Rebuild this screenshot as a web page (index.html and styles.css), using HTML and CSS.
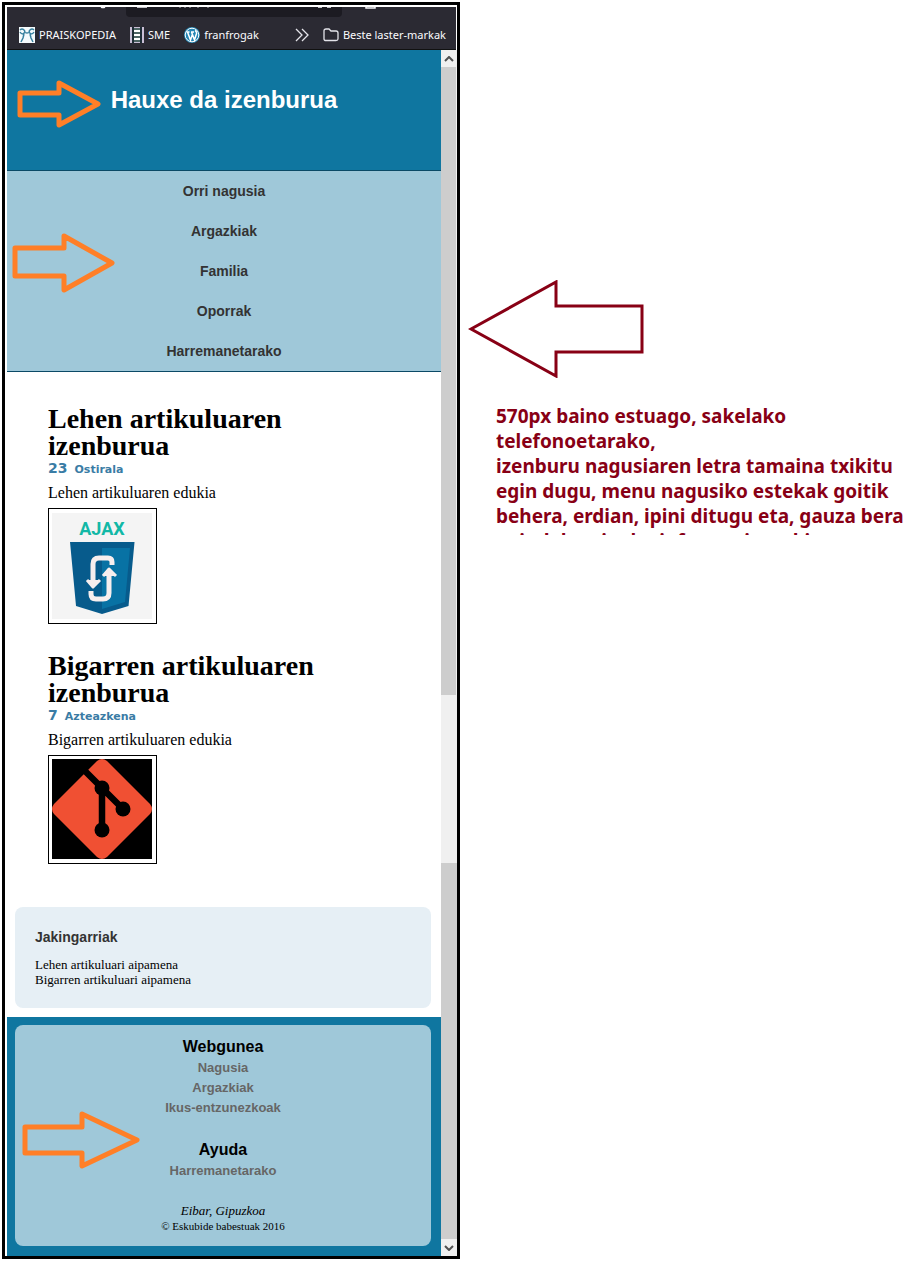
FILE: index.html
```html
<!DOCTYPE html>
<html lang="eu">
<head>
<meta charset="utf-8">
<title>Hauxe da izenburua</title>
<link rel="stylesheet" href="styles.css">
</head>
<body>
<div class="layout">
  <div class="browser">
    <div class="toolbar">
      <div class="tabs">
        <svg class="tab-icons" viewBox="0 0 449 10" aria-hidden="true">
          <path d="M119 0v6q0 4 4 4h208q4 0 4-4V0z" fill="#1c1b22"/>
          <path d="M94 0q2 1 4 0M130 0h10M359 0v1h9V0M311 0h4M320 0h4" stroke="#fbfbfe" stroke-width="1.500" fill="none"/>
          <path d="M173 0v1M178 0v1M183 0v1M191 0v1M201 0v1" stroke="#bbb" fill="none"/>
        </svg>
      </div>
      <nav class="bookmarks" aria-label="Laster-markak">
        <a class="bookmark" href="#"><svg width="16" height="16" viewBox="0 0 16 16" aria-hidden="true"><rect width="16" height="16" fill="#f5fbfd"/><path d="M1 3q2-2 4 0t-1 4q-2 0-3-2M15 3q-2-2-4 0t1 4q2 0 3-2M5 5q3 2 6 0M5 7l-1 4-2 4M11 7l1 4 2 4" fill="none" stroke="#38819f" stroke-width="1.500"/></svg>PRAISKOPEDIA</a>
        <a class="bookmark" href="#"><svg width="14" height="16" viewBox="0 0 14 16" aria-hidden="true"><rect width="14" height="16" fill="#c9bfd6"/><path d="M3 0v16M11 0v16" stroke="#1d2c35" stroke-width="2"/><path d="M4 2h6M4 6h6M4 10h6M4 14h6" stroke="#25483f" stroke-width="1.500"/><path d="M4 4h6M4 8h6M4 12h6" stroke="#fff" stroke-width="2"/></svg>SME</a>
        <a class="bookmark" href="#"><svg width="16" height="16" viewBox="0 0 16 16" aria-hidden="true"><circle cx="8" cy="8" r="8" fill="#2587b5"/><circle cx="8" cy="8" r="6.800" fill="none" stroke="#fff" stroke-width="1"/><path d="M2.500 5h3M7 5h3M3.500 5l3 8L8.500 7M7.500 5l3 8 2.200-7q-.5-2-1.700-2.500" fill="none" stroke="#fff" stroke-width="1.500"/></svg>franfrogak</a>
        <button class="more" type="button" aria-label="Gehiago"><svg width="14" height="14" viewBox="0 0 14 14" aria-hidden="true"><path d="M1 1l6 6-6 6M7 1l6 6-6 6" fill="none" stroke="#e4e4ea" stroke-width="1.300"/></svg></button>
        <a class="bookmark folder" href="#"><svg width="16" height="14" viewBox="0 0 16 14" aria-hidden="true"><path d="M1 11V3q0-2 2-2h3l2 2h5q2 0 2 2v6q0 1.500-2 1.500H3Q1 12.500 1 11z" fill="none" stroke="#e4e4ea" stroke-width="1.300"/></svg>Beste laster-markak</a>
      </nav>
    </div>
    <div class="viewport">
      <div class="page">
        <header class="masthead"><h1>Hauxe da izenburua</h1></header>
        <nav class="menu" aria-label="Menu nagusia">
          <a href="#">Orri nagusia</a>
          <a href="#">Argazkiak</a>
          <a href="#">Familia</a>
          <a href="#">Oporrak</a>
          <a href="#">Harremanetarako</a>
        </nav>
        <main class="articles">
          <article>
            <h2>Lehen artikuluaren izenburua</h2>
            <p class="date"><span class="day">23</span>Ostirala</p>
            <p class="text">Lehen artikuluaren edukia</p>
            <svg class="picture" width="109" height="116" viewBox="1 1 107 114" role="img" aria-label="AJAX">
              <rect x="4" y="5" width="100" height="106" fill="#f4f4f4"/>
              <text class="ajax" x="54" y="27" text-anchor="middle">AJAX</text>
              <path d="M22 34h64.500l-6 64L54 106l-26-8z" fill="#075b8c"/>
              <path d="M54 40h28l-5 54-23 7z" fill="#0872a4"/>
              <path d="M64 57v-3q0-4-4-4H51q-6 0-6 6v20M43 83v3q0 5 5 5h7q6 0 6-6V65" fill="none" stroke="#f7eeee" stroke-width="5"/>
              <path d="M39 72l6 7 7-7M55 68l6-7 7 7" fill="#f7eeee" stroke="#f7eeee" stroke-width="3" stroke-linejoin="round"/>
            </svg>
          </article>
          <article>
            <h2>Bigarren artikuluaren izenburua</h2>
            <p class="date"><span class="day">7</span>Azteazkena</p>
            <p class="text">Bigarren artikuluaren edukia</p>
            <svg class="picture" width="109" height="109" viewBox="1 1 107 107" role="img" aria-label="Git">
              <rect x="4" y="4" width="100" height="100" fill="#000"/>
              <path d="M49 6q5-4 10 0l43 43q4 5 0 10l-43 43q-5 4-10 0L6 59q-4-5 0-10z" fill="#f05033"/>
              <path d="M34 13l20 20 21 21M54 33v42" fill="none" stroke="#000" stroke-width="6.500"/>
              <circle cx="54" cy="33" r="7.500"/><circle cx="75" cy="54" r="7.500"/><circle cx="54" cy="75" r="7.500"/>
            </svg>
          </article>
        </main>
        <aside class="facts">
          <h3>Jakingarriak</h3>
          <p>Lehen artikuluari aipamena</p>
          <p>Bigarren artikuluari aipamena</p>
        </aside>
        <footer class="footer">
          <div class="panel">
            <section>
              <h4>Webgunea</h4>
              <a href="#">Nagusia</a>
              <a href="#">Argazkiak</a>
              <a href="#">Ikus-entzunezkoak</a>
            </section>
            <section>
              <h4>Ayuda</h4>
              <a href="#">Harremanetarako</a>
            </section>
            <address>Eibar, Gipuzkoa</address>
            <small>© Eskubide babestuak 2016</small>
          </div>
        </footer>
      </div>
      <div class="scrollbar" aria-hidden="true">
        <div class="step"><svg width="10" height="6" viewBox="0 0 10 6"><path d="M1 5l4-4 4 4" fill="none" stroke="#505050" stroke-width="2"/></svg></div>
        <div class="thumb upper"></div>
        <div class="track"></div>
        <div class="thumb lower"></div>
        <div class="step"><svg width="10" height="6" viewBox="0 0 10 6"><path d="M1 1l4 4 4-4" fill="none" stroke="#505050" stroke-width="2"/></svg></div>
      </div>
    </div>
    <svg class="arrow arrow-title" width="84" height="48" viewBox="0 0 84 48" aria-hidden="true"><path d="M3 13h39V3l39 21-39 21V35H3z"/></svg>
    <svg class="arrow arrow-menu" width="104" height="60" viewBox="0 0 104 60" aria-hidden="true"><path d="M3 15h49V3l48 27-48 27V43H3z"/></svg>
    <svg class="arrow arrow-footer" width="120" height="58" viewBox="0 0 120 58" aria-hidden="true"><path d="M3 16h57V3l55 26-55 26V42H3z"/></svg>
  </div>
  <section class="notes">
    <svg width="176" height="98" viewBox="0 0 176 98" aria-hidden="true"><path d="M3 49L88 2v24h86v46H88v24z" fill="none" stroke="#880015" stroke-width="3"/></svg>
    <p class="note">570px baino estuago, sakelako telefonoetarako,<br>izenburu nagusiaren letra tamaina txikitu egin dugu, menu nagusiko estekak goitik behera, erdian, ipini ditugu eta, gauza bera egindako oineko informazioarekin</p>
  </section>
</div>
</body>
</html>
```
FILE: styles.css
```css
* { box-sizing: border-box; }
body { margin: 0; background: #fff; color: #000; font-family: "Liberation Serif", serif; }
h1, h2, h3, h4, p { margin: 0; }
a { color: inherit; text-decoration: none; }
svg { display: block; flex: none; }

.layout { display: grid; grid-template-columns: 456fr 466fr; align-items: start; padding: 2px 0 7px 2px; }
.browser { position: relative; border: 3px solid #000; padding: 2px 0 0 2px; }

.toolbar { margin-right: 1px; background: #2b2a33; border-bottom: 1px solid #111; }
.tabs { height: 10px; overflow: hidden; }
.tab-icons { width: 449px; height: 10px; }
.bookmarks { display: flex; align-items: center; height: 32px; padding: 4px 10px 0 12px; color: #fbfbfe; font: 11px/16px "Noto Sans", sans-serif; white-space: nowrap; }
.bookmark { display: flex; align-items: center; gap: 4px; margin-right: 14px; }
.more { display: flex; margin: 0 14px 0 auto; padding: 0; border: 0; background: none; }
.folder { margin-right: 0; }

.viewport { display: flex; }
.page { flex: 1; min-width: 0; }
.masthead { height: 121px; padding-top: 36px; background: #0f76a0; border-bottom: 1px solid #0b4a66; color: #fff; text-align: center; }
.masthead h1 { font: bold 24px/28px "Liberation Sans", sans-serif; }
.menu { display: flex; flex-direction: column; background: #9fc8d9; border-bottom: 1px solid #0b4a66; color: #333; text-align: center; font: bold 14px/40px "Liberation Sans", sans-serif; }

.articles { padding: 33px 41px 43px; }
.articles article + article { margin-top: 28px; }
.articles h2 { font-size: 28px; line-height: 27px; }
.date { color: #3a7ca5; font: bold 11px/18px "DejaVu Sans", sans-serif; }
.day { margin-right: 7px; font-size: 14px; }
.text { padding: 3px 0 5px; font-size: 16px; line-height: 21px; }
.picture { border: 1px solid #000; }
.ajax { fill: #12b8a6; font: bold 18px "Liberation Sans Narrow", "Roboto", sans-serif; }

.facts { margin: 0 10px 9px 8px; padding: 20px 20px 21px; border-radius: 8px; background: #e6eff5; font-size: 13px; line-height: 15px; }
.facts h3 { margin-bottom: 9px; color: #333; font: bold 14px/21px "Liberation Sans", sans-serif; }

.footer { padding: 8px 10px 10px 8px; background: #0f76a0; }
.panel { display: flex; flex-direction: column; padding: 11px 0 12px; border-radius: 8px; background: #9fc8d9; text-align: center; }
.panel section { display: flex; flex-direction: column; margin-bottom: 21px; color: #666; font: bold 13px/20px "Liberation Sans", sans-serif; }
.panel h4 { color: #000; font-size: 16px; line-height: 22px; }
.panel address { font-size: 13px; line-height: 17px; }
.panel small { font-size: 11px; line-height: 15px; }

.scrollbar { display: flex; flex-direction: column; width: 16px; background: #f0f0f0; }
.step { display: flex; align-items: center; justify-content: center; height: 17px; }
.thumb { background: #cdcdcd; }
.upper { flex: 627; margin-right: 1px; }
.track { flex: 168; margin-right: 1px; }
.lower { flex: 376; }

.arrow { position: absolute; fill: none; stroke: #ff7f27; stroke-width: 5; stroke-linejoin: round; }
.arrow-title { left: 12px; top: 75px; }
.arrow-menu { left: 7px; top: 228px; }
.arrow-footer { left: 17px; top: 1106px; }

.notes { padding: 278px 8px 0; color: #880015; }
.note { height: 131px; margin: 26px 0 0 28px; overflow: hidden; font: bold 19px/25px "Noto Sans", "Open Sans", sans-serif; }
```
